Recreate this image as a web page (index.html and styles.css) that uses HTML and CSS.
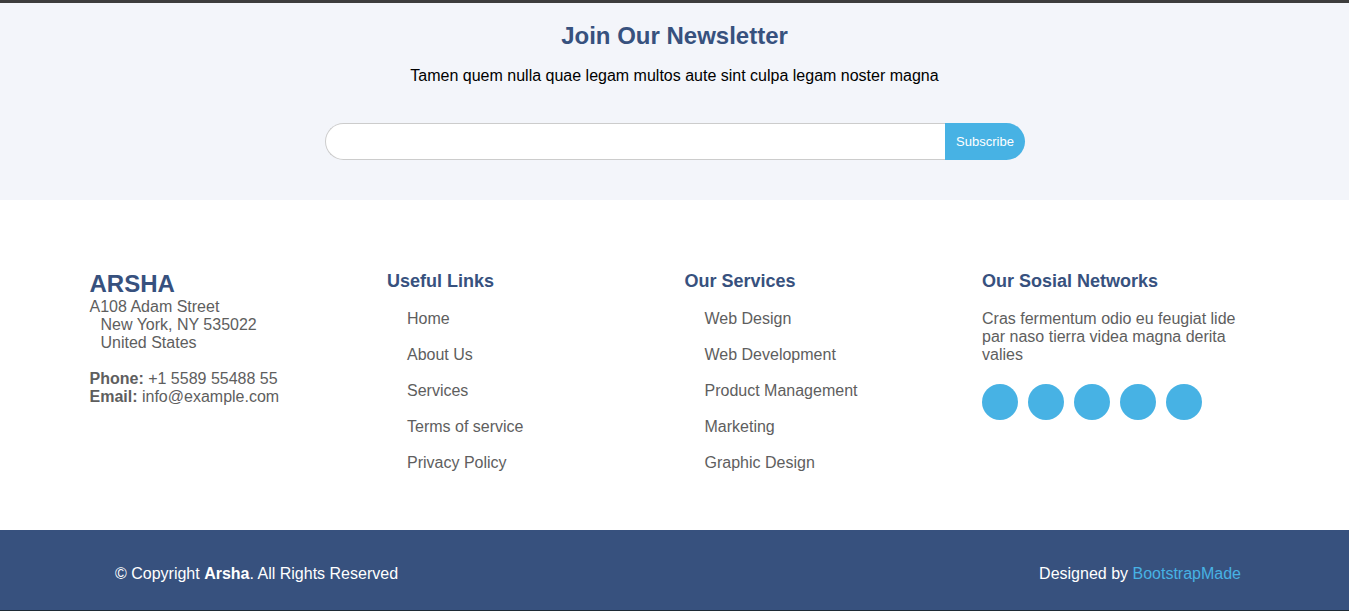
FILE: index.html
```html
<!DOCTYPE html>
<html lang="en">
<head>
<meta charset="utf-8">
<title>Arsha Footer</title>
<link rel="stylesheet" href="styles.css">
</head>
<body>
<div class="topline"></div>
<section class="newsletter">
  <h4 class="nl-title">Join Our Newsletter</h4>
  <p class="nl-sub">Tamen quem nulla quae legam multos aute sint culpa legam noster magna</p>
  <form class="nl-form">
    <input class="nl-input" type="email" aria-label="Email">
    <button class="nl-btn" type="button">Subscribe</button>
  </form>
</section>
<section class="footer-top">
  <div class="container">
    <div class="col">
      <h3 class="brand">ARSHA</h3>
      <p class="contact">A108 Adam Street<br><span class="indent">New York, NY 535022</span><br><span class="indent">United States</span><br><br><strong>Phone:</strong> +1 5589 55488 55<br><strong>Email:</strong> info@example.com</p>
    </div>
    <div class="col">
      <h4 class="col-title">Useful Links</h4>
      <ul class="links">
        <li>Home</li>
        <li>About Us</li>
        <li>Services</li>
        <li>Terms of service</li>
        <li>Privacy Policy</li>
      </ul>
    </div>
    <div class="col">
      <h4 class="col-title">Our Services</h4>
      <ul class="links">
        <li>Web Design</li>
        <li>Web Development</li>
        <li>Product Management</li>
        <li>Marketing</li>
        <li>Graphic Design</li>
      </ul>
    </div>
    <div class="col">
      <h4 class="col-title">Our Sosial Networks</h4>
      <p class="social-text">Cras fermentum odio eu feugiat lide par naso tierra videa magna derita valies</p>
      <div class="social">
        <span class="dot"></span><span class="dot"></span><span class="dot"></span><span class="dot"></span><span class="dot"></span>
      </div>
    </div>
  </div>
</section>
<section class="footer-bottom">
  <div class="copyright">© Copyright <strong>Arsha</strong>. All Rights Reserved</div>
  <div class="credits">Designed by <a href="#">BootstrapMade</a></div>
</section>
<div class="bottomline"></div>
</body>
</html>
```

FILE: styles.css
```css
* { box-sizing: border-box; }
html, body { margin: 0; padding: 0; }
body {
  font-family: "Liberation Sans", Arial, sans-serif;
  font-size: 16px;
  color: #444;
  background: #fff;
}
.topline { height: 3px; background: #3d3d3d; }
.newsletter {
  background: #f3f5fa;
  padding: 18px 0 40px;
  text-align: center;
}
.nl-title {
  margin: 0;
  font-size: 24px;
  line-height: 29px;
  font-weight: 700;
  color: #37517e;
}
.nl-sub {
  margin: 16px 0 0;
  font-size: 16px;
  line-height: 19px;
  color: #000;
}
.nl-form {
  margin: 38px auto 0;
  width: 700px;
  display: flex;
  height: 37px;
}
.nl-input {
  flex: 1;
  height: 37px;
  border: 1px solid #ccc;
  border-right: none;
  border-radius: 50px 0 0 50px;
  background: #fff;
  outline: none;
  padding: 0 12px;
  font: inherit;
}
.nl-btn {
  width: 80px;
  height: 37px;
  border: 0;
  border-radius: 0 50px 50px 0;
  background: #47b2e4;
  color: #fff;
  font-family: "Liberation Sans", Arial, sans-serif;
  font-size: 13px;
  padding: 0 0 0 1px;
}
.footer-top {
  padding: 70px 0 49px;
  background: #fff;
}
.container {
  width: 1190px;
  margin: 0 auto;
  display: flex;
}
.col {
  flex: 0 0 25%;
  padding: 0 10px;
}
.brand {
  margin: 2px 0 2px;
  font-size: 24px;
  line-height: 24px;
  font-weight: 700;
  color: #37517e;
}
.contact {
  margin: 0;
  font-size: 16px;
  line-height: 18px;
  color: #5e5e5e;
}
.indent { padding-left: 11px; }
.contact strong { font-weight: 700; }
.col-title {
  margin: 0;
  font-size: 18px;
  line-height: 22px;
  font-weight: 700;
  color: #37517e;
}
.links {
  list-style: none;
  margin: 9px 0 0;
  padding: 0;
}
.links li {
  padding: 8px 0 8px 20px;
  line-height: 20px;
  color: #5e5e5e;
}
.social-text {
  margin: 18px 0 0;
  line-height: 18px;
  color: #5e5e5e;
}
.social {
  display: flex;
  gap: 10px;
  margin-top: 20px;
}
.dot {
  width: 36px;
  height: 36px;
  border-radius: 50%;
  background: #47b2e4;
}
.footer-bottom {
  background: #37517e;
  color: #fff;
  padding: 34px 108px 26px 115px;
  display: flex;
  justify-content: space-between;
  line-height: 20px;
}
.credits a { color: #47b2e4; text-decoration: none; }
.bottomline { height: 1px; background: #1e2b36; }
```
